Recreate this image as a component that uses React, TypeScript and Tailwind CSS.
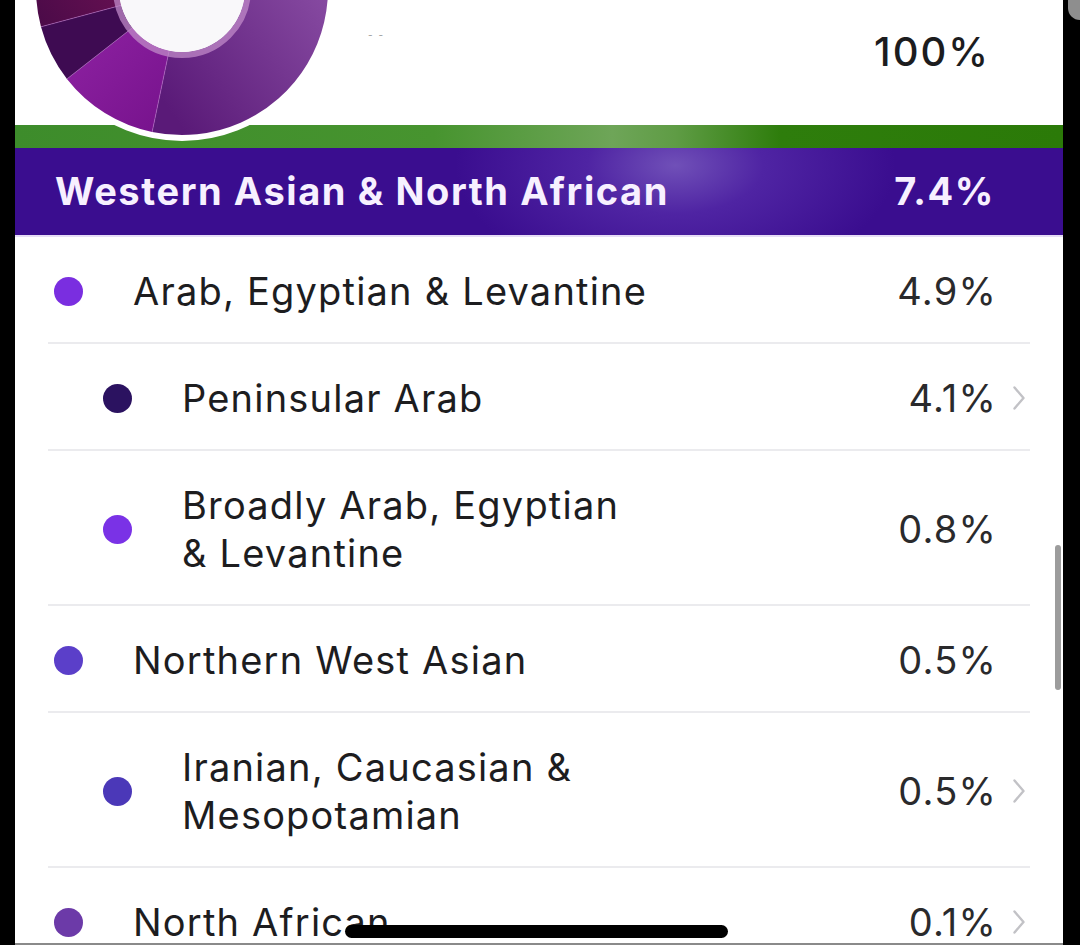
import { Fragment } from "react";

type Row = {
	label: string[];
	value: string;
	level: 0 | 1;
	dot: string;
	chevron?: boolean;
};

const rows: Row[] = [
	{ label: ["Arab, Egyptian & Levantine"], value: "4.9%", level: 0, dot: "bg-[#7a2ee0]" },
	{ label: ["Peninsular Arab"], value: "4.1%", level: 1, dot: "bg-[#2b1260]", chevron: true },
	{ label: ["Broadly Arab, Egyptian", "& Levantine"], value: "0.8%", level: 1, dot: "bg-[#7a32e6]" },
	{ label: ["Northern West Asian"], value: "0.5%", level: 0, dot: "bg-[#5b3fc9]" },
	{ label: ["Iranian, Caucasian &", "Mesopotamian"], value: "0.5%", level: 1, dot: "bg-[#4b38b8]", chevron: true },
	{ label: ["North African"], value: "0.1%", level: 0, dot: "bg-[#6c3aa8]", chevron: true },
];

// donut centre sits above the visible top edge
const CX = 182;
const CY = -11;
const R_OUT = 146;
const R_IN = 63;

function pt(r: number, deg: number) {
	const a = (deg * Math.PI) / 180;
	return `${(CX + r * Math.cos(a)).toFixed(2)} ${(CY + r * Math.sin(a)).toFixed(2)}`;
}

function arc(a0: number, a1: number) {
	const large = a1 - a0 > 180 ? 1 : 0;
	return `M ${pt(R_OUT, a0)} A ${R_OUT} ${R_OUT} 0 ${large} 1 ${pt(R_OUT, a1)} L ${pt(R_IN, a1)} A ${R_IN} ${R_IN} 0 ${large} 0 ${pt(R_IN, a0)} Z`;
}

function Donut() {
	const splits = [101.8, 142, 165];
	return (
		<svg
			className="absolute left-0 top-0 z-10"
			width={345}
			height={160}
			viewBox="15 0 345 160"
		>
			<defs>
				<linearGradient id="segA" x1="0.2" y1="1" x2="1" y2="0.2">
					<stop offset="0" stopColor="#5a1a78" />
					<stop offset="1" stopColor="#8e52a8" />
				</linearGradient>
				<linearGradient id="segB" x1="0" y1="0" x2="1" y2="1">
					<stop offset="0" stopColor="#8e22a2" />
					<stop offset="1" stopColor="#76128c" />
				</linearGradient>
				<linearGradient id="segD" x1="0" y1="1" x2="1" y2="0">
					<stop offset="0" stopColor="#4a0a48" />
					<stop offset="1" stopColor="#7a1458" />
				</linearGradient>
			</defs>
			<circle cx={CX} cy={CY} r={R_OUT + 3} fill="#ffffff" stroke="#ffffff" strokeWidth={6} />
			<path d={arc(-40, 101.8)} fill="url(#segA)" />
			<path d={arc(101.8, 142)} fill="url(#segB)" />
			<path d={arc(142, 165)} fill="#3e0b52" />
			<path d={arc(165, 220)} fill="url(#segD)" />
			{splits.map((a) => (
				<line
					key={a}
					x1={CX + R_IN * Math.cos((a * Math.PI) / 180)}
					y1={CY + R_IN * Math.sin((a * Math.PI) / 180)}
					x2={CX + R_OUT * Math.cos((a * Math.PI) / 180)}
					y2={CY + R_OUT * Math.sin((a * Math.PI) / 180)}
					stroke="#b46cc4"
					strokeOpacity={0.6}
					strokeWidth={1}
				/>
			))}
			<circle cx={CX} cy={CY} r={R_IN + 3} fill="none" stroke="#c08ac8" strokeOpacity={0.75} strokeWidth={6} />
			<circle cx={CX} cy={CY} r={R_IN} fill="#f9f8fa" />
		</svg>
	);
}

function Chevron() {
	return (
		<svg width={14} height={26} viewBox="0 0 14 26" fill="none">
			<path d="M2.5 2.5l9 10.5-9 10.5" stroke="#c2c2c6" strokeWidth={2.4} strokeLinecap="round" strokeLinejoin="round" />
		</svg>
	);
}

export default function App() {
	return (
		<div className="relative h-[945px] w-[1080px] overflow-hidden bg-black font-['Inter',sans-serif]">
			<div className="relative ml-[15px] h-full w-[1048px] bg-white">
				<Donut />

				{/* Top summary */}
				<div className="flex h-[125px] items-start pr-[73px]">
					<span className="ml-[353px] mt-[28px] text-[10px] tracking-[6px] text-[#9a9a9a]">--</span>
					<span className="ml-auto mt-[30px] text-[40px] font-medium leading-[44px] tracking-[2px] text-[#1c1c1e]">
						100%
					</span>
				</div>

				{/* Region header */}
				<div className="h-[23px] bg-[linear-gradient(to_right,#3d8c2b_0%,#47942f_40%,#6ea558_57%,#5f9c45_63%,#2e7d0c_73%,#2b7a08_100%)]" />
				<div className="flex h-[87px] items-center justify-between bg-[radial-gradient(ellipse_220px_120px_at_63%_20%,#7050b8_0%,#4f24a3_40%,#3a0d8f_100%)] pl-[40px] pr-[68px] text-[38px] font-bold tracking-[1.6px] text-[#f7f0ff]">
					<span>Western Asian &amp; North African</span>
					<span>7.4%</span>
				</div>
				<div className="h-[2px] bg-[#e6dcf6]" />

				{/* Sub-regions */}
				<div className="mx-[33px]">
					{rows.map((r, i) => (
						<div
							key={i}
							className={`flex items-center border-b-2 border-[#ebebee] pb-[27px] pt-[30px] ${r.level === 1 ? "pl-[55px]" : "pl-[6px]"}`}
						>
							<span className={`h-[29px] w-[29px] shrink-0 rounded-full ${r.dot}`} />
							<div className="ml-[50px] text-[38px] leading-[48px] tracking-[1.2px] text-[#1d1d1f]">
								{r.label.map((l, j) => (
									<Fragment key={j}>
										<span className="block">{l}</span>
									</Fragment>
								))}
							</div>
							<span className="ml-auto text-[38px] leading-[48px] tracking-[1.2px] text-[#2a2a2c]">{r.value}</span>
							<span className="flex w-[33px] shrink-0 justify-start pl-[15px]">
								{r.chevron && <Chevron />}
							</span>
						</div>
					))}
				</div>

				{/* scroll indicator */}
				<div className="absolute left-[1040px] top-[545px] h-[145px] w-[6px] rounded-full bg-[#9c9c9c]" />
				{/* home indicator */}
				<div className="absolute left-[330px] top-[925px] h-[13px] w-[383px] rounded-full bg-black" />
				<div className="absolute bottom-0 left-0 h-[2px] w-full bg-[#8a8a8a]" />
			</div>
			<div className="absolute left-[1068px] top-[-12px] h-[32px] w-[24px] rounded-full bg-[#8e8e8e]" />
		</div>
	);
}
